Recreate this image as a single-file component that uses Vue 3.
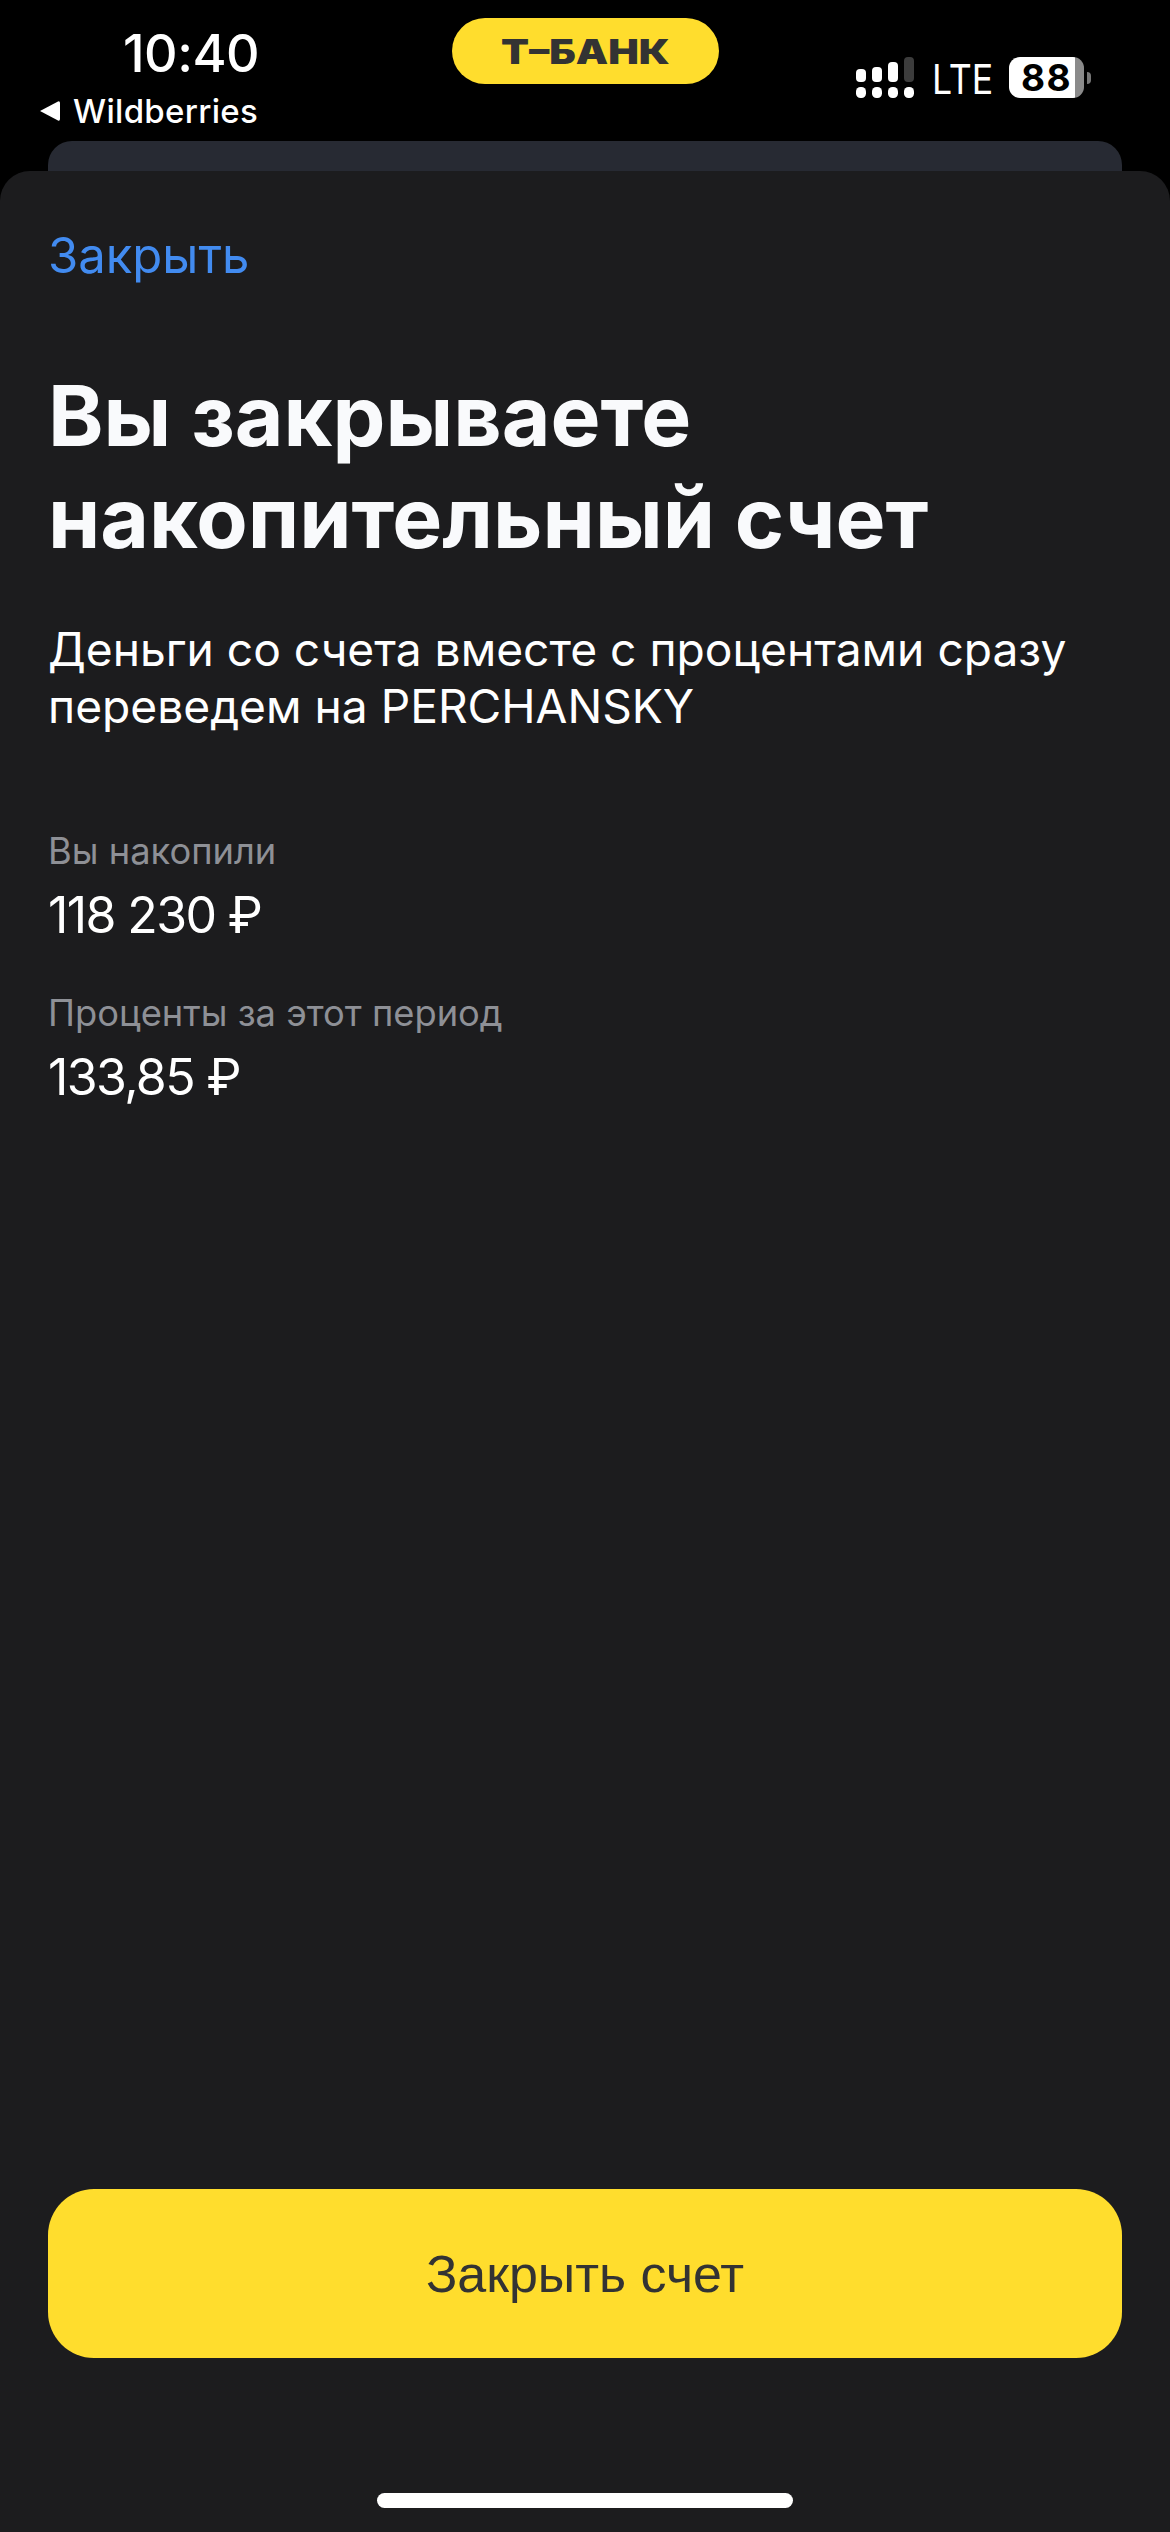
<template>
  <div class="screen">
    <header class="status">
      <div class="status-left">
        <div class="time">10:40</div>
        <div class="back">
          <svg class="back-arrow" viewBox="0 0 21 22"><path d="M1 11 19 1.500Q21 .8 21 3V19Q21 21.200 19 20.500Z" fill="#fff" /></svg>
          <span>Wildberries</span>
        </div>
      </div>
      <div class="island">
        <span>Т–БАНК</span>
      </div>
      <div class="status-right">
        <svg class="signal" viewBox="0 0 58 41" width="58" height="41">
          <rect v-for="bar in bars" :key="bar.x" :x="bar.x" :y="bar.y" width="10" :height="25 - bar.y" rx="4" :fill="bar.fill" />
          <rect v-for="bar in bars" :key="'dot' + bar.x" :x="bar.x" y="30" width="10" height="11" rx="4.500" fill="#fff" />
        </svg>
        <span class="lte">LTE</span>
        <div class="battery">
          <div class="battery-body"><span>88</span></div>
          <div class="battery-nub"></div>
        </div>
      </div>
    </header>

    <div class="behind"></div>

    <main class="sheet">
      <a class="close-link">Закрыть</a>
      <h1>Вы закрываете<br />накопительный счет</h1>
      <p class="lead">Деньги со счета вместе с процентами сразу переведем на PERCHANSKY</p>

      <div class="facts">
        <div v-for="fact in facts" :key="fact.label" class="fact">
          <div class="fact-label">{{ fact.label }}</div>
          <div class="fact-value">{{ fact.value }}</div>
        </div>
      </div>

      <button class="submit">Закрыть счет</button>
      <div class="home-bar"></div>
    </main>
  </div>
</template>

<script setup>
const bars = [
  { x: 0, y: 12, fill: '#fff' },
  { x: 16, y: 10, fill: '#fff' },
  { x: 32, y: 5, fill: '#fff' },
  { x: 48, y: 0, fill: '#3c3c3c' },
]

const facts = [
  { label: 'Вы накопили', value: '118 230 ₽' },
  { label: 'Проценты за этот период', value: '133,85 ₽' },
]
</script>

<style>
html,
body {
  background: #000;
}
</style>

<style scoped>
.screen {
  width: 1170px;
  height: 2532px;
  display: flex;
  flex-direction: column;
  background: #000;
  color: #fff;
  font-family: Inter, "Noto Sans", sans-serif;
  overflow: hidden;
}

.status {
  height: 141px;
  flex: none;
  display: flex;
  justify-content: space-between;
}

.status-left {
  width: 400px;
  padding: 25px 0 0 39px;
  box-sizing: border-box;
}

.time {
  margin-left: 84px;
  font-size: 52px;
  line-height: 58px;
  font-weight: 500;
  letter-spacing: -0.5px;
}

.back {
  display: flex;
  align-items: center;
  gap: 13px;
  margin-top: 8px;
  font-size: 33px;
  line-height: 40px;
  font-weight: 500;
  letter-spacing: 0.3px;
}

.back-arrow {
  width: 21px;
  height: 22px;
}

.island {
  width: 267px;
  height: 66px;
  margin-top: 18px;
  border-radius: 33px;
  background: #ffdd2d;
  color: #333;
  display: flex;
  align-items: center;
  justify-content: center;
  font-size: 34px;
  font-weight: 900;
}

.island span {
  display: block;
  transform: scaleX(1.2);
}

.status-right {
  width: 400px;
  box-sizing: border-box;
  padding: 57px 79px 0 0;
  display: flex;
  justify-content: flex-end;
  align-items: flex-start;
}

.signal {
  margin-right: 18px;
}

.lte {
  width: 58px;
  margin-right: 19px;
  margin-top: 2px;
  font-size: 41px;
  line-height: 41px;
  font-weight: 400;
  transform: scaleX(0.87);
  transform-origin: left center;
}

.battery {
  display: flex;
  align-items: center;
  gap: 3px;
}

.battery-body {
  width: 75px;
  height: 41px;
  border-radius: 11px;
  background: linear-gradient(to right, #fff 66px, #8a8a8a 66px);
  color: #000;
  font-size: 37px;
  font-weight: 700;
  line-height: 41px;
  letter-spacing: 1.5px;
  padding-left: 12px;
  box-sizing: border-box;
}

.battery-nub {
  width: 4px;
  height: 12px;
  border-radius: 0 4px 4px 0;
  background: #777;
}

.behind {
  height: 30px;
  flex: none;
  margin: 0 48px;
  border-radius: 24px 24px 0 0;
  background: #272a33;
}

.sheet {
  flex: 1;
  display: flex;
  flex-direction: column;
  padding: 0 48px;
  background: #1c1c1e;
  border-radius: 30px 30px 0 0;
}

.close-link {
  margin-top: 55px;
  font-size: 49px;
  line-height: 60px;
  color: #428bf0;
}

h1 {
  margin: 79px 0 0;
  font-size: 84px;
  line-height: 102px;
  font-weight: 700;
  color: #f9fafc;
}

.lead {
  margin: 52px 0 0;
  font-size: 46.150px;
  line-height: 57px;
}

.facts {
  margin-top: 94px;
  display: flex;
  flex-direction: column;
  gap: 45px;
}

.fact-label {
  font-size: 36.300px;
  line-height: 44px;
  color: #8e9096;
}

.fact-value {
  margin-top: 11px;
  font-size: 50px;
  line-height: 62px;
  letter-spacing: -1.6px;
}

.submit {
  margin-top: auto;
  height: 169px;
  flex: none;
  border: 0;
  border-radius: 46px;
  background: #ffdd2d;
  color: #333;
  font-family: "Liberation Sans", Arial, sans-serif;
  font-size: 52px;
}

.home-bar {
  width: 416px;
  height: 15px;
  flex: none;
  margin: 135px auto 24px;
  border-radius: 8px;
  background: #fff;
}
</style>
